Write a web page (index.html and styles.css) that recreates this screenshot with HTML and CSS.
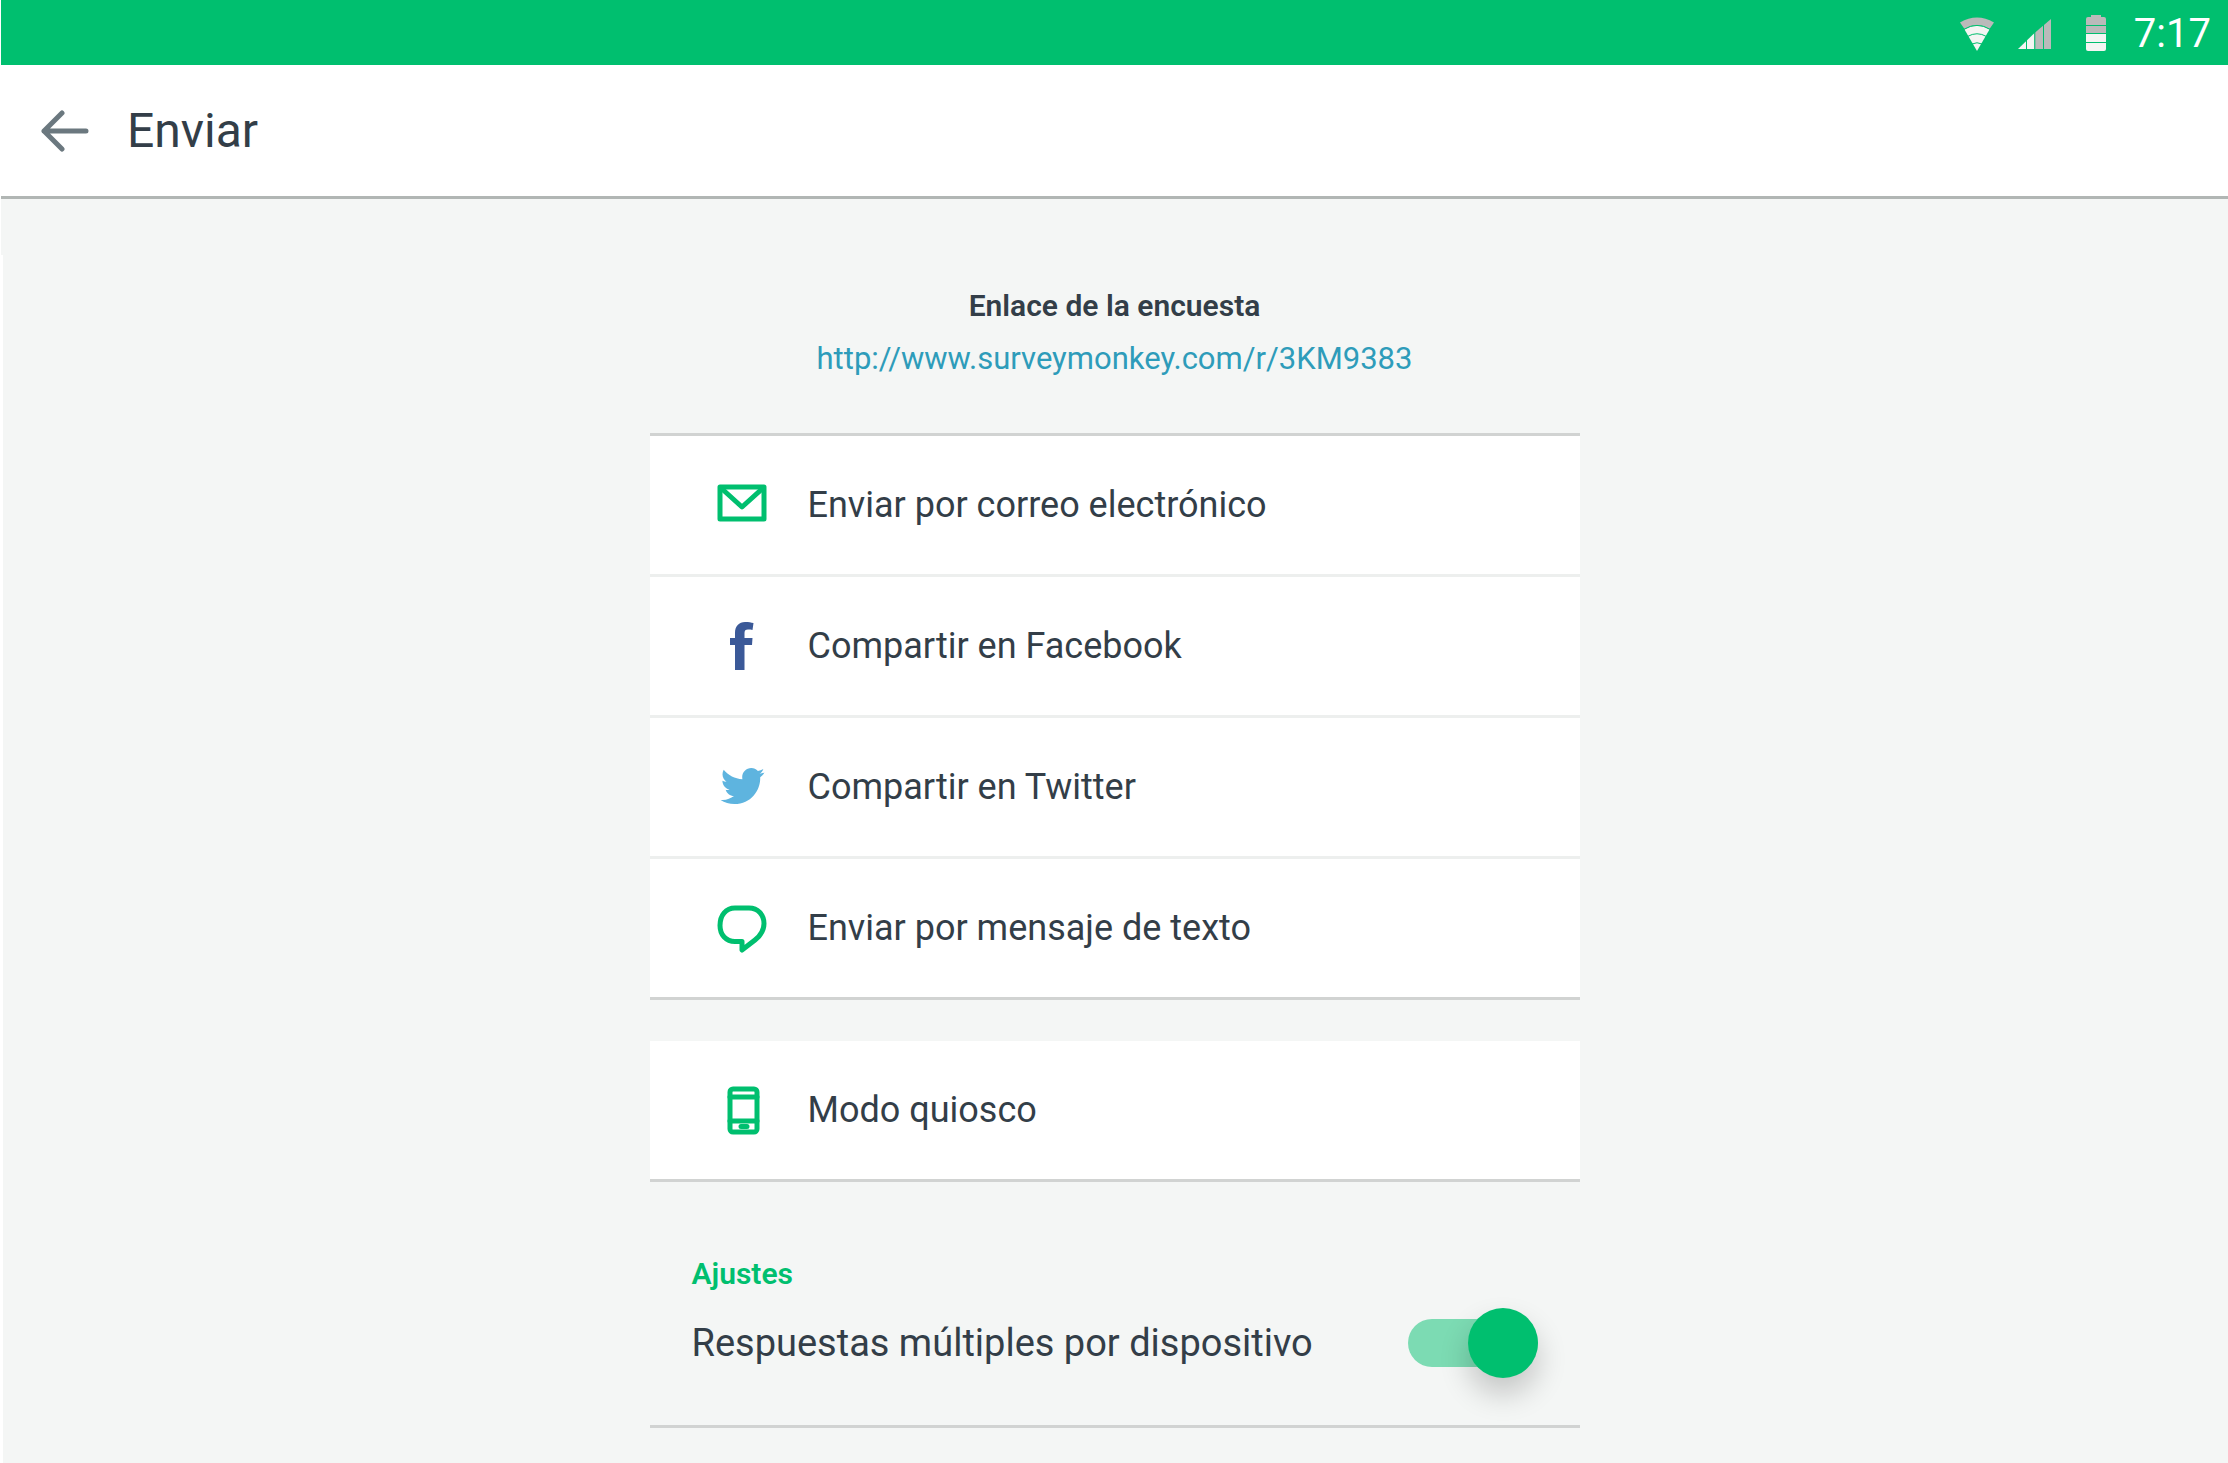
FILE: index.html
```html
<!DOCTYPE html>
<html lang="es">
<head>
<meta charset="utf-8">
<meta name="viewport" content="width=device-width, initial-scale=1">
<title>Enviar</title>
<link rel="stylesheet" href="styles.css">
</head>
<body>
<div class="status-bar">
  <svg class="status-icon" viewBox="0 0 34 34" aria-hidden="true">
    <path fill="#bababa" d="M0 5.500Q17-4.500 34 5.500L29.500 12Q17 4 4.500 12Z"/>
    <path fill="#f4f5f3" d="M4.500 12.500Q17 4.500 29.500 12.500L17 34Z"/>
    <path fill="none" stroke="#00bf6f" d="M4 12.300Q17 4.500 30 12.300M7.500 19.500Q17 14 26.500 19.500M12 27Q17 24.500 22 27"/>
  </svg>
  <svg class="status-icon" viewBox="0 0 34 34" aria-hidden="true">
    <path fill="#f4f5f3" d="M0 32L16.500 16V32Z"/>
    <path fill="#bababa" d="M16.500 16L33 2V32H16.500Z"/>
    <path stroke="#00bf6f" d="M8.500 20V33M16.800 14V33M25.500 6V33"/>
  </svg>
  <svg class="status-icon" viewBox="0 0 34 34" aria-hidden="true">
    <path fill="#bababa" d="M15 -2H25V0H28Q30 0 30 2V17H10V2Q10 0 12 0H15Z"/>
    <path fill="#f4f5f3" d="M10 17H30V32Q30 34 28 34H12Q10 34 10 32Z"/>
    <path stroke="#00bf6f" d="M10 8.500H30M10 16.500H30M10 25.500H30"/>
  </svg>
  <time class="clock">7:17</time>
</div>
<header class="app-bar">
  <button class="back" type="button" aria-label="Atrás">
    <svg viewBox="0 0 48 42" aria-hidden="true"><path d="M45 21H3M21 3L3 21L21 39"/></svg>
  </button>
  <h1 class="title">Enviar</h1>
</header>
<main class="content">
  <div class="column">
    <section class="survey-link">
      <h2 class="link-label">Enlace de la encuesta</h2>
      <a class="link" href="http://www.surveymonkey.com/r/3KM9383">http://www.surveymonkey.com/r/3KM9383</a>
    </section>
    <div class="card card-share">
      <button class="row" type="button">
        <svg class="icon line" viewBox="0 0 48 48" aria-hidden="true">
          <path d="M2 6H46V38H2Z"/><path d="M3 7L24 26L45 7"/>
        </svg>
        <span>Enviar por correo electrónico</span>
      </button>
      <button class="row" type="button">
        <svg class="icon facebook" viewBox="0 0 48 48" aria-hidden="true">
          <path d="M17 48V23H12V16H17V11C17 4 21 0 27 0C31 0 33 .5 35.500 1L34.500 8C33 7.500 32 7.500 30 7.500C27.500 7.500 26.500 8.500 26.500 11V16H34.500L34 23H26.500V48Z"/>
        </svg>
        <span>Compartir en Facebook</span>
      </button>
      <button class="row" type="button">
        <svg class="icon twitter" viewBox="0 0 48 48" aria-hidden="true">
          <path d="M46.500 9.400C45 10.100 43.300 10.600 41.500 10.800C43.300 9.700 44.700 8 45.300 5.900C43.700 6.900 41.800 7.600 39.900 8C38.200 6.200 35.900 5.100 33.300 5.100C28.300 5.100 24.200 9.100 24.200 14.100C24.200 14.800 24.300 15.500 24.400 16.200C16.900 15.800 10.200 12.200 5.700 6.700C4.900 8.100 4.500 9.600 4.500 11.300C4.500 14.400 6.100 17.200 8.500 18.800C7 18.800 5.600 18.300 4.400 17.700V17.800C4.400 22.200 7.500 25.800 11.600 26.700C10.900 26.900 10.100 27 9.300 27C8.700 27 8.200 26.900 7.600 26.800C8.700 30.400 12.100 33 16 33.100C12.900 35.500 9 37 4.800 37C4 37 3.300 37 2.600 36.900C6.600 39.500 11.300 41 16.400 41C33.100 41 42.200 27.300 42.200 15.400V14.200C43.900 12.900 45.400 11.300 46.500 9.400Z"/>
        </svg>
        <span>Compartir en Twitter</span>
      </button>
      <button class="row" type="button">
        <svg class="icon line" viewBox="0 0 48 48" aria-hidden="true">
          <path d="M17 4H31C40 4 46 11 46 19.500C46 27 42 32 37 36L24 46V37.500H17C8 37.500 2 31 2 21.500C2 11 8 4 17 4Z"/>
        </svg>
        <span>Enviar por mensaje de texto</span>
      </button>
    </div>
    <div class="card card-kiosk">
      <button class="row" type="button">
        <svg class="icon line" viewBox="0 0 48 48" aria-hidden="true">
          <rect x="12" y="3" width="27" height="43" rx="3"/>
          <path d="M12 11H39M12 35H39M23 40.500H29"/>
        </svg>
        <span>Modo quiosco</span>
      </button>
    </div>
    <section class="settings">
      <h2 class="settings-title">Ajustes</h2>
      <label class="setting">
        <span>Respuestas múltiples por dispositivo</span>
        <input class="switch" type="checkbox" role="switch" checked>
      </label>
    </section>
  </div>
</main>
</body>
</html>
```
FILE: styles.css
```css
* { box-sizing: border-box; }

html {
  background: #fff;
}

body {
  margin: 0 0 0 1px;
  min-height: 100vh;
  display: flex;
  flex-direction: column;
  background: #f4f6f5;
  color: #333e48;
  font-family: Roboto, "Liberation Sans", sans-serif;
}

h1, h2 { margin: 0; }

button {
  border: 0;
  background: none;
  color: inherit;
  font: inherit;
  cursor: pointer;
}

.status-bar {
  display: flex;
  align-items: center;
  justify-content: flex-end;
  gap: 24px;
  height: 65px;
  padding: 2px 17px 0 0;
  background: #00bf6f;
}

.status-icon {
  width: 34px;
  height: 34px;
  overflow: visible;
}

.clock {
  color: #fff;
  font-size: 40px;
  line-height: 48px;
}

.app-bar {
  display: flex;
  align-items: center;
  gap: 38px;
  height: 134px;
  padding-left: 40px;
  background: #fff;
  border-bottom: 3px solid #b1b6b4;
}

.back {
  display: flex;
  padding: 0;
}

.back svg {
  width: 48px;
  height: 42px;
  fill: none;
  stroke: #6b787f;
  stroke-width: 5;
  stroke-linecap: round;
  stroke-linejoin: round;
}

.title {
  font-size: 48px;
  line-height: 56px;
  font-weight: 400;
}

.content {
  flex: 1;
  margin-top: 56px;
  padding: 0 26px 34px 24px;
  border-left: 2px solid #fff;
}

.column {
  max-width: 930px;
  margin: 0 auto;
}

.survey-link {
  display: flex;
  flex-direction: column;
  align-items: center;
  gap: 14px;
  padding: 32px 0 54px;
}

.link-label,
.settings-title {
  font-size: 30px;
  line-height: 38px;
  font-weight: 600;
}

.link {
  color: #2e9cba;
  font-size: 31px;
  line-height: 40px;
  text-decoration: none;
}

.card {
  background: #fff;
  border-bottom: 3px solid #d1d3d2;
}

.card-share {
  border-top: 3px solid #d1d3d2;
}

.card-kiosk {
  margin-top: 41px;
}

.row {
  display: flex;
  align-items: center;
  gap: 42px;
  width: 100%;
  height: 138px;
  padding: 0 68px;
  font-size: 36px;
  line-height: 44px;
  text-align: left;
}

.row + .row {
  height: 141px;
  border-top: 3px solid #edefee;
}

.icon {
  flex: none;
  width: 48px;
  height: 48px;
}

.line {
  fill: none;
  stroke: #00bf6f;
  stroke-width: 5;
  stroke-linecap: round;
  stroke-linejoin: round;
  overflow: visible;
}

.facebook { fill: #3b5998; }

.twitter { fill: #5eb4df; }

.settings {
  padding: 73px 42px 47px;
  border-bottom: 3px solid #d1d3d2;
}

.settings-title {
  color: #00bf6f;
}

.setting {
  display: flex;
  align-items: center;
  justify-content: space-between;
  margin-top: 15px;
  font-size: 38px;
  line-height: 48px;
}

.switch {
  appearance: none;
  display: grid;
  grid-template-columns: 1fr;
  align-items: center;
  width: 130px;
  height: 70px;
  margin: 0;
  cursor: pointer;
}

.switch::before,
.switch::after {
  content: "";
  grid-area: 1 / 1;
}

.switch::before {
  height: 48px;
  border-radius: 24px;
  background: #b9bfbc;
}

.switch::after {
  width: 70px;
  height: 70px;
  border-radius: 50%;
  background: #fff;
  box-shadow: 0 16px 30px rgba(0, 0, 0, .2);
}

.switch:checked::before { background: #7cdbb3; }

.switch:checked::after {
  justify-self: end;
  background: #00bf6f;
}
```
